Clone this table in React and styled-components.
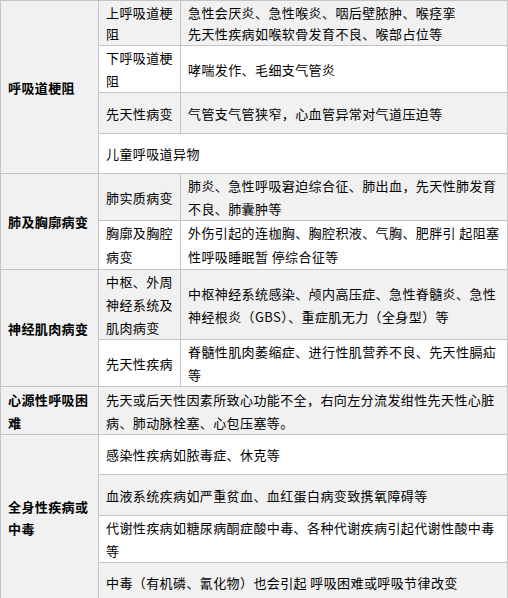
import React from 'react'
import styled, { createGlobalStyle } from 'styled-components'

const GlobalStyle = createGlobalStyle`
    html, body {
        margin: 0;
        padding: 0;
        background: #fff;
    }
`

const Table = styled.table`
    border-collapse: collapse;
    table-layout: fixed;
    width: 507px;
    font-family: "Noto Sans CJK SC", "Noto Sans", sans-serif;
    font-size: 13px;
    letter-spacing: 0.4px;
    color: #000;
`

const Row = styled.tr`
    height: ${props => props.$h}px;
`

const Cell = styled.td`
    border: 1px solid #c4c4c4;
    background: ${props => props.$white ? '#fff' : '#f1f1f1'};
    padding: 0 4px 0 7px;
    vertical-align: middle;
    white-space: nowrap;
    line-height: ${props => props.$lh || 23}px;
    font-weight: ${props => props.$bold ? 700 : 400};
    overflow: hidden;
`

const Label = styled(Cell)`
    font-weight: 700;
    background: #f1f1f1;
`

function App(){
    return(
        <>
            <GlobalStyle/>
            <Table>
                <colgroup>
                    <col style={{width: 98}}/>
                    <col style={{width: 82}}/>
                    <col style={{width: 327}}/>
                </colgroup>
                <tbody>
                    <Row $h={45}>
                        <Label rowSpan={4}>呼吸道梗阻</Label>
                        <Cell $lh={21}>上呼吸道梗<br/>阻</Cell>
                        <Cell $lh={21}>急性会厌炎、急性喉炎、咽后壁脓肿、喉痉挛<br/>先天性疾病如喉软骨发育不良、喉部占位等</Cell>
                    </Row>
                    <Row $h={47}>
                        <Cell $white>下呼吸道梗<br/>阻</Cell>
                        <Cell $white>哮喘发作、毛细支气管炎</Cell>
                    </Row>
                    <Row $h={41}>
                        <Cell>先天性病变</Cell>
                        <Cell>气管支气管狭窄，心血管异常对气道压迫等</Cell>
                    </Row>
                    <Row $h={40}>
                        <Cell $white colSpan={2}>儿童呼吸道异物</Cell>
                    </Row>

                    <Row $h={47}>
                        <Label rowSpan={2}>肺及胸廓病变</Label>
                        <Cell>肺实质病变</Cell>
                        <Cell>肺炎、急性呼吸窘迫综合征、肺出血，先天性肺发育<br/>不良、肺囊肿等</Cell>
                    </Row>
                    <Row $h={46}>
                        <Cell $white $lh={24}>胸廓及胸腔<br/>病变</Cell>
                        <Cell $white $lh={24}>外伤引起的连枷胸、胸腔积液、气胸、肥胖引 起阻塞<br/>性呼吸睡眠暂 停综合征等</Cell>
                    </Row>

                    <Row $h={70}>
                        <Label rowSpan={2}>神经肌肉病变</Label>
                        <Cell>中枢、外周<br/>神经系统及<br/>肌肉病变</Cell>
                        <Cell>中枢神经系统感染、颅内高压症、急性脊髓炎、急性<br/>神经根炎（GBS）、重症肌无力（全身型）等</Cell>
                    </Row>
                    <Row $h={45}>
                        <Cell $white>先天性疾病</Cell>
                        <Cell $white>脊髓性肌肉萎缩症、进行性肌营养不良、先天性膈疝<br/>等</Cell>
                    </Row>

                    <Row $h={48}>
                        <Label>心源性呼吸困<br/>难</Label>
                        <Cell colSpan={2}>先天或后天性因素所致心功能不全，右向左分流发绀性先天性心脏<br/>病、肺动脉栓塞、心包压塞等。</Cell>
                    </Row>

                    <Row $h={40}>
                        <Label rowSpan={4} $lh={22}>全身性疾病或<br/>中毒</Label>
                        <Cell $white colSpan={2}>感染性疾病如脓毒症、休克等</Cell>
                    </Row>
                    <Row $h={41}>
                        <Cell colSpan={2}>血液系统疾病如严重贫血、血红蛋白病变致携氧障碍等</Cell>
                    </Row>
                    <Row $h={47}>
                        <Cell $white colSpan={2}>代谢性疾病如糖尿病酮症酸中毒、各种代谢疾病引起代谢性酸中毒<br/>等</Cell>
                    </Row>
                    <Row $h={39}>
                        <Cell colSpan={2}>中毒（有机磷、氰化物）也会引起 呼吸困难或呼吸节律改变</Cell>
                    </Row>
                </tbody>
            </Table>
        </>
    )
}

export default App
